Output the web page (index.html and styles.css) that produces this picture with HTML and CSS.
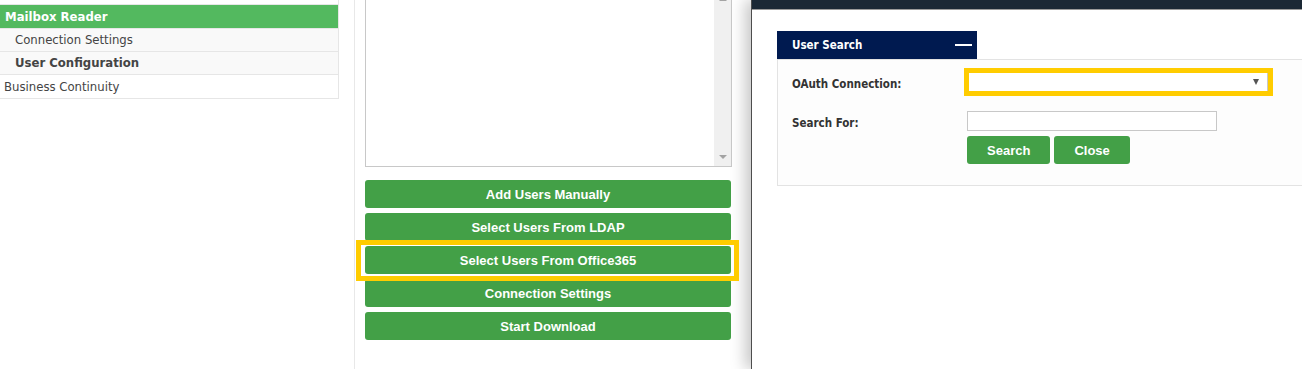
FILE: index.html
```html
<!DOCTYPE html>
<html lang="en">
<head>
  <meta charset="UTF-8" />
  <title>Mailbox Reader - User Configuration</title>
  <link rel="stylesheet" href="styles.css">
</head>
<body>

  <div class="page">
    <!-- left menu -->
    <aside class="sidebar">
      <ul class="menu">
        <li class="menu-head">Mailbox Reader</li>
        <li class="menu-sub">Connection Settings</li>
        <li class="menu-sub active">User Configuration</li>
        <li class="menu-item">Business Continuity</li>
      </ul>
    </aside>

    <!-- user list + actions -->
    <main class="content">
      <div class="user-list">
        <div class="list-area"></div>
        <div class="scrollbar">
          <span class="arrow-up"></span>
          <span class="arrow-down"></span>
        </div>
      </div>
      <div class="actions">
        <button class="green-btn">Add Users Manually</button>
        <button class="green-btn">Select Users From LDAP</button>
        <button class="green-btn highlight">Select Users From Office365</button>
        <button class="green-btn">Connection Settings</button>
        <button class="green-btn">Start Download</button>
      </div>
    </main>

    <!-- slide-in dialog -->
    <section class="dialog">
      <div class="dialog-bar"></div>
      <div class="dialog-body">
        <div class="panel-tab">
          <span>User Search</span>
          <span class="tab-toggle"></span>
        </div>
        <div class="panel">
          <div class="form-row">
            <label class="form-label">OAuth Connection:</label>
            <div class="fake-select"><span class="select-arrow"></span></div>
          </div>
          <div class="form-row row-search">
            <label class="form-label">Search For:</label>
            <div class="search-field">
              <input type="text" class="text-input" />
              <div class="search-buttons">
                <button class="green-btn small">Search</button>
                <button class="green-btn small">Close</button>
              </div>
            </div>
          </div>
        </div>
      </div>
    </section>
  </div>

</body>
</html>
```

FILE: styles.css
```css
body, html {
  margin: 0;
  padding: 0;
  height: 100%;
  overflow: hidden;
  background: #fff;
  font-family: "DejaVu Sans Condensed", "DejaVu Sans", sans-serif;
  color: #444;
}

.page {
  display: flex;
  height: 100vh;
}

/* left menu */
.sidebar {
  width: 339px;
  flex-shrink: 0;
  margin-right: 15px;
}

.menu {
  list-style: none;
  margin: 0;
  padding: 4px 0 0;
  border-right: 1px solid #e6e6e6;
  border-bottom: 1px solid #e6e6e6;
  font-size: 13px;
}

.menu li {
  height: 22px;
  line-height: 22px;
  border-top: 1px solid #e6e6e6;
}

.menu-head {
  background: #53b95f;
  color: #fff;
  font-weight: bold;
  padding-left: 5px;
}

.menu li.menu-head,
.menu li.menu-item {
  height: 23px;
  line-height: 23px;
}

.menu-sub {
  background: #f9f9f9;
  padding-left: 15px;
}

.menu-sub.active {
  font-weight: bold;
}

.menu-item {
  padding-left: 4px;
}

/* middle column */
.content {
  width: 397px;
  flex-shrink: 0;
  box-sizing: border-box;
  border-left: 1px solid #e8e8e8;
  padding-left: 10px;
}

.user-list {
  display: flex;
  width: 367px;
  height: 177px;
  box-sizing: border-box;
  margin-top: -10px;
  border: 1px solid #c8c8c8;
  background: #fff;
}

.list-area {
  flex: 1;
}

.scrollbar {
  width: 17px;
  background: #f0f0f0;
  display: flex;
  flex-direction: column;
  justify-content: space-between;
  align-items: center;
  padding: 6px 0 7px;
}

.arrow-up {
  width: 0;
  height: 0;
  border-left: 4px solid transparent;
  border-right: 4px solid transparent;
  border-bottom: 4px solid #a3a3a3;
}

.arrow-down {
  width: 0;
  height: 0;
  border-left: 4px solid transparent;
  border-right: 4px solid transparent;
  border-top: 4px solid #a3a3a3;
}

.actions {
  display: flex;
  flex-direction: column;
  gap: 5px;
  margin-top: 13px;
  width: 366px;
}

.green-btn {
  height: 28px;
  background: #43a047;
  color: #fff;
  border: none;
  border-radius: 3px;
  font-family: "Liberation Sans", Arial, sans-serif;
  font-weight: bold;
  font-size: 13px;
  padding: 0;
  cursor: pointer;
}

.highlight {
  position: relative;
}

.highlight::after {
  content: "";
  position: absolute;
  top: -6px;
  right: -8px;
  bottom: -7px;
  left: -9px;
  border: 5px solid #ffcc00;
  z-index: 1;
}

/* dialog */
.dialog {
  flex: 1;
  border-left: 1px solid #4d4d4d;
  box-shadow: -6px 0 14px rgba(0, 0, 0, 0.22);
  background: #fff;
  position: relative;
}

.dialog-bar {
  height: 9px;
  background: #1b2835;
  border-bottom: 1px solid #9a9a9a;
}

.dialog-body {
  padding: 21px 0 0 25px;
}

.panel-tab {
  width: 200px;
  height: 28px;
  box-sizing: border-box;
  background: #001a50;
  color: #fff;
  font-weight: bold;
  font-size: 11.5px;
  display: flex;
  align-items: center;
  justify-content: space-between;
  padding: 0 5px 0 15px;
}

.tab-toggle {
  width: 17px;
  height: 2px;
  background: #fff;
}

.panel {
  border: 1px solid #e3e3e3;
  margin-right: -30px;
  background: #fdfdfd;
  padding: 13px 0 21px 14px;
}

.form-row {
  display: flex;
  align-items: center;
}

.row-search {
  align-items: flex-start;
  margin-top: 20px;
}

.form-label {
  width: 175px;
  flex-shrink: 0;
  font-weight: bold;
  font-size: 11.5px;
  color: #333;
  padding-top: 4px;
}

.row-search .form-label {
  line-height: 20px;
  padding-top: 2px;
}

.fake-select {
  width: 299px;
  height: 18px;
  margin-left: 2px;
  background: #fff;
  border-right: 1px solid #c8c8c8;
  outline: 5px solid #ffcc00;
  display: flex;
  align-items: center;
  justify-content: flex-end;
  padding-right: 8px;
  box-sizing: border-box;
}

.select-arrow {
  width: 0;
  height: 0;
  border-left: 3px solid transparent;
  border-right: 3px solid transparent;
  border-top: 6px solid #555;
}

.text-input {
  display: block;
  width: 250px;
  height: 20px;
  box-sizing: border-box;
  border: 1px solid #c8c8c8;
  margin: 0;
  padding: 2px 4px;
}

.search-buttons {
  display: flex;
  gap: 4px;
  margin-top: 5px;
}

.green-btn.small {
  padding: 0 20px;
}
```
